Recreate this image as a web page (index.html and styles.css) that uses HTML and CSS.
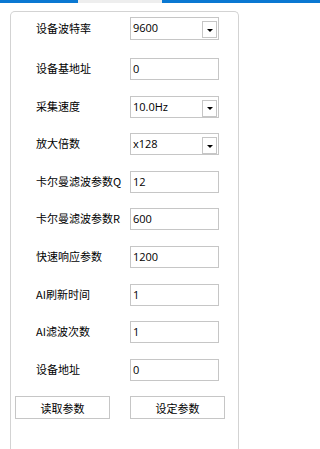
FILE: index.html
```html
<!DOCTYPE html>
<html lang="zh-CN">
<head>
<meta charset="utf-8">
<title>参数设置</title>
<link rel="stylesheet" href="styles.css">
</head>
<body>
<div class="tabbar"></div>
<div class="panel">
  <div class="row row-first">
    <div class="label">设备波特率</div>
    <div class="field combo"><span class="val">9600</span><span class="drop"><span class="arrow"></span></span></div>
  </div>
  <div class="row">
    <div class="label">设备基地址</div>
    <div class="field"><span class="val">0</span></div>
  </div>
  <div class="row">
    <div class="label">采集速度</div>
    <div class="field combo"><span class="val">10.0Hz</span><span class="drop"><span class="arrow"></span></span></div>
  </div>
  <div class="row">
    <div class="label">放大倍数</div>
    <div class="field combo"><span class="val">x128</span><span class="drop"><span class="arrow"></span></span></div>
  </div>
  <div class="row">
    <div class="label">卡尔曼滤波参数Q</div>
    <div class="field"><span class="val">12</span></div>
  </div>
  <div class="row">
    <div class="label">卡尔曼滤波参数R</div>
    <div class="field"><span class="val">600</span></div>
  </div>
  <div class="row">
    <div class="label">快速响应参数</div>
    <div class="field"><span class="val">1200</span></div>
  </div>
  <div class="row">
    <div class="label">AI刷新时间</div>
    <div class="field"><span class="val">1</span></div>
  </div>
  <div class="row">
    <div class="label">AI滤波次数</div>
    <div class="field"><span class="val">1</span></div>
  </div>
  <div class="row">
    <div class="label">设备地址</div>
    <div class="field"><span class="val">0</span></div>
  </div>
  <div class="buttons">
    <div class="btn">读取参数</div>
    <div class="btn">设定参数</div>
  </div>
</div>
</body>
</html>
```

FILE: styles.css
```css
html, body {
  margin: 0;
  padding: 0;
  background: #ffffff;
}
body {
  font-family: "Open Sans", "Noto Sans CJK SC", sans-serif;
  font-size: 11px;
  color: #000;
  height: 449px;
  overflow: hidden;
}
.tabbar {
  height: 3px;
  width: 100%;
  background: linear-gradient(to right, #0a78d2 0, #0a78d2 78px, #eeeeee 78px, #eeeeee 162px, #0a78d2 162px, #0a78d2 100%);
}

.panel {
  box-sizing: border-box;
  margin: 8px 0 0 10px;
  width: 229px;
  height: 438px;
  border: 1px solid #d3d3d3;
  border-bottom: none;
  border-radius: 5px 5px 0 0;
  padding-top: 5px;
  display: flex;
  flex-direction: column;
  gap: 15.6px;
}
.row {
  display: flex;
  align-items: center;
  height: 22px;
  flex: none;
}
.row-first {
  height: 23px;
  margin-bottom: 2.4px;
}
.label {
  width: 94px;
  padding-left: 25px;
  line-height: 14px;
  font-family: "Noto Sans CJK SC", sans-serif;
  white-space: nowrap;
  position: relative;
  top: -1px;
}
.field {
  box-sizing: border-box;
  width: 89px;
  height: 100%;
  border: 1px solid #c6c6c6;
  display: flex;
  align-items: center;
  padding-left: 2px;
  background: #fff;
}
.val {
  flex: 1;
  line-height: 14px;
  font-family: "Open Sans", "Noto Sans CJK SC", sans-serif;
}
.combo {
  align-items: flex-start;
  padding-top: 3px;
}
.drop {
  box-sizing: border-box;
  width: 15px;
  height: 17px;
  margin-right: 1px;
  border: 1px solid #c6c6c6;
  display: flex;
  align-items: center;
  justify-content: center;
}
.arrow {
  width: 0;
  height: 0;
  border-left: 3px solid transparent;
  border-right: 3px solid transparent;
  border-top: 3px solid #000;
  margin-top: 1px;
}
.buttons {
  display: flex;
  gap: 20px;
  padding-left: 4px;
  flex: none;
}
.btn {
  box-sizing: border-box;
  width: 95px;
  height: 23px;
  border: 1px solid #c6c6c6;
  display: flex;
  align-items: center;
  justify-content: center;
  font-family: "Noto Sans CJK SC", sans-serif;
  line-height: 14px;
}
```
